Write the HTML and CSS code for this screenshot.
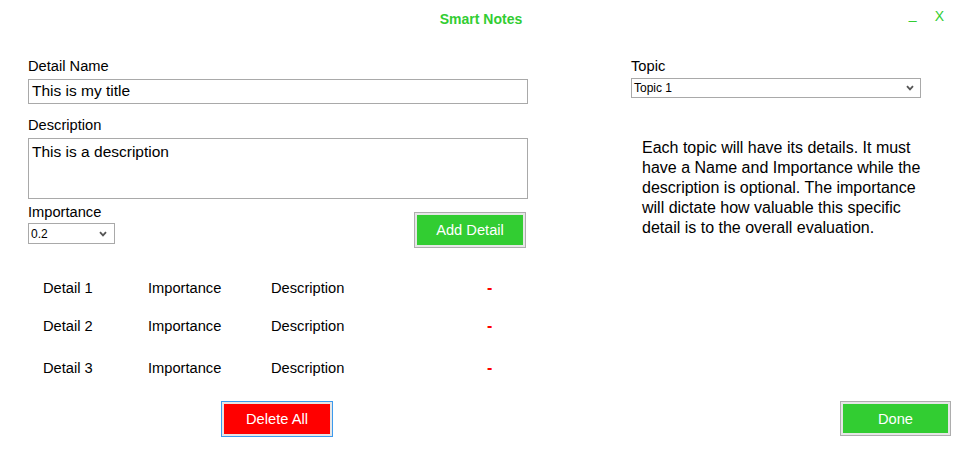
FILE: index.html
```html
<!DOCTYPE html>
<html lang="en">
<head>
<meta charset="utf-8">
<title>Smart Notes</title>
<link rel="stylesheet" href="styles.css">
</head>
<body>
<div class="window">
  <header class="titlebar">
    <div class="spacer"></div>
    <h1 class="title">Smart Notes</h1>
    <div class="controls">
      <span class="ctl ctl-min">_</span>
      <span class="ctl ctl-close">X</span>
    </div>
  </header>
  <main class="content">
    <section class="col-left">
      <div class="label">Detail Name</div>
      <div class="input">This is my title</div>
      <div class="label label-gap">Description</div>
      <div class="textarea">This is a description</div>
      <div class="imp-row">
        <div class="imp-group">
          <div class="label">Importance</div>
          <div class="select select-small">
            <span>0.2</span>
            <svg class="chev" width="8" height="6" viewBox="0 0 8 6"><path d="M1 1.2 L4 4.4 L7 1.2" fill="none" stroke="#555" stroke-width="1.8"/></svg>
          </div>
        </div>
        <button class="btn btn-green btn-add">Add Detail</button>
      </div>
      <div class="rows">
        <div class="row"><span>Detail 1</span><span>Importance</span><span>Description</span><span class="minus">-</span></div>
        <div class="row"><span>Detail 2</span><span>Importance</span><span>Description</span><span class="minus">-</span></div>
        <div class="row row-spaced"><span>Detail 3</span><span>Importance</span><span>Description</span><span class="minus">-</span></div>
      </div>
      <button class="btn btn-red btn-delete">Delete All</button>
    </section>
    <section class="col-right">
      <div class="label">Topic</div>
      <div class="select select-wide">
        <span>Topic 1</span>
        <svg class="chev" width="8" height="6" viewBox="0 0 8 6"><path d="M1 1.2 L4 4.4 L7 1.2" fill="none" stroke="#555" stroke-width="1.8"/></svg>
      </div>
      <p class="info">Each topic will have its details. It must have a Name and Importance while the description is optional. The importance will dictate how valuable this specific detail is to the overall evaluation.</p>
      <button class="btn btn-green btn-done">Done</button>
    </section>
  </main>
</div>
</body>
</html>
```
FILE: styles.css
```css
* { box-sizing: border-box; }
html, body { margin: 0; padding: 0; background: #fff; }
body {
  font-family: "Liberation Sans", Arial, sans-serif;
  color: #000;
  width: 962px;
  height: 450px;
  overflow: hidden;
}
.window { width: 962px; height: 450px; }

.titlebar {
  height: 38px;
  display: grid;
  grid-template-columns: 1fr auto 1fr;
  align-items: center;
}
.title {
  margin: 0;
  font-size: 14px;
  font-weight: bold;
  color: #32cd32;
  line-height: 38px;
}
.controls {
  justify-self: end;
  display: flex;
  align-items: flex-start;
  gap: 18px;
  padding-right: 18px;
  height: 38px;
  color: #32cd32;
}
.ctl-min { padding-top: 6px; font-size: 14px; }
.ctl-close { padding-top: 8px; font-size: 14px; }

.content {
  display: grid;
  grid-template-columns: 500px 320px;
  column-gap: 103px;
  padding-left: 28px;
  padding-top: 20px;
}

.label {
  font-size: 14.67px;
  line-height: 17px;
  height: 17px;
}
.label-gap { margin-top: 13px; }

.input {
  margin-top: 4px;
  height: 25px;
  border: 1px solid #a9a9a9;
  font-size: 15.5px;
  line-height: 22px;
  padding-left: 3px;
}
.textarea {
  margin-top: 4px;
  height: 61px;
  border: 1px solid #a9a9a9;
  font-size: 15.5px;
  line-height: 20px;
  padding: 3px 3px;
}

.imp-row {
  margin-top: 5px;
  display: flex;
  justify-content: space-between;
  align-items: flex-start;
  padding-right: 2px;
}
.select {
  border: 1px solid #a9a9a9;
  display: flex;
  align-items: center;
  justify-content: space-between;
  font-size: 12px;
  padding: 0 7px 0 2px;
}
.select-small { margin-top: 2px; width: 87px; height: 21px; }
.select-wide { margin-top: 3px; width: 290px; height: 20px; padding-right: 6px; }
.chev { display: block; }

.btn {
  font-family: "Liberation Sans", Arial, sans-serif;
  font-size: 14.67px;
  color: #fff;
  border: 1px solid #adadad;
  padding: 0;
  cursor: pointer;
}
.btn-green { background: #32cd32; box-shadow: inset 0 0 0 2px #e6e6e6; }
.btn-red { background: #ff0000; box-shadow: inset 0 0 0 2px #e6e6e6; border-color: #3c9aed; }
.btn-add { margin-top: 8px; width: 112px; height: 36px; }
.btn-delete { margin-top: 14px; margin-left: 193px; width: 112px; height: 36px; }
.btn-done { margin-top: auto; align-self: flex-end; width: 111px; height: 35px; margin-bottom: 1px; }

.rows { margin-top: 21px; }
.row {
  height: 38px;
  display: grid;
  grid-template-columns: 105px 123px 216px auto;
  align-items: center;
  padding-left: 15px;
  font-size: 14.67px;
}
.row-spaced { margin-top: 4px; }
.minus { color: #ff0000; font-weight: bold; font-size: 16px; }

.col-left { display: flex; flex-direction: column; align-items: stretch; }
.col-left .btn-delete { align-self: flex-start; }
.col-right { display: flex; flex-direction: column; align-items: flex-start; }

.info {
  margin: 40px 0 0 11px;
  width: 282px;
  font-size: 16px;
  line-height: 20px;
}
```
